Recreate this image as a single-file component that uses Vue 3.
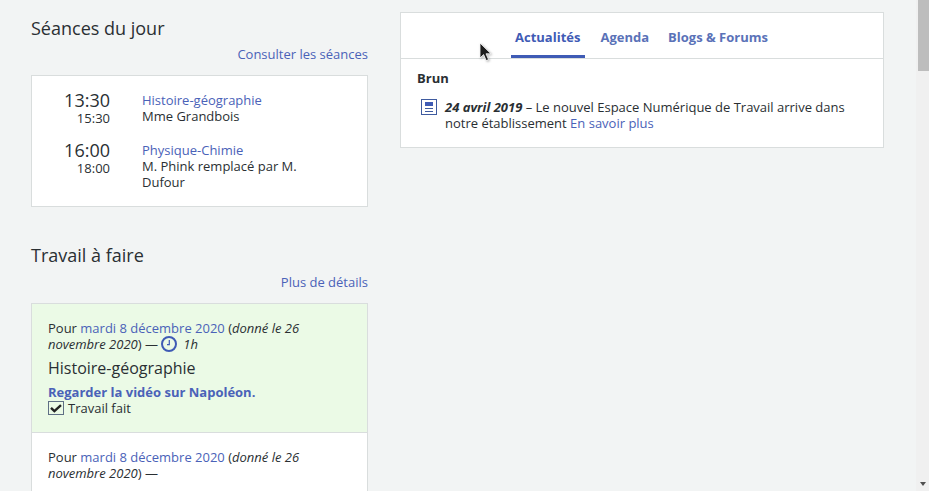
<script setup>
const sessions = [
  { start: '13:30', end: '15:30', subject: 'Histoire-géographie', teacher: 'Mme Grandbois' },
  { start: '16:00', end: '18:00', subject: 'Physique-Chimie', teacher: 'M. Phink remplacé par M. Dufour' },
]
const tabs = ['Actualités', 'Agenda', 'Blogs & Forums']
</script>

<template>
  <div class="page">
    <div class="content">
      <div class="left">
        <section class="seances">
          <h2>Séances du jour</h2>
          <div class="more"><a>Consulter les séances</a></div>
          <div class="box sessions">
            <div v-for="s in sessions" :key="s.start" class="session">
              <div class="times">
                <div class="start">{{ s.start }}</div>
                <div class="end">{{ s.end }}</div>
              </div>
              <div class="info">
                <a>{{ s.subject }}</a>
                <div>{{ s.teacher }}</div>
              </div>
            </div>
          </div>
        </section>
        <section class="travail">
          <h2>Travail à faire</h2>
          <div class="more"><a>Plus de détails</a></div>
          <div class="box work">
            <div class="hw done">
              <div class="when">
                Pour <a>mardi 8 décembre 2020</a> (<em>donné le 26 novembre 2020</em>) —
                <svg class="clock" width="16" height="16" viewBox="0 0 16 16">
                  <circle cx="8" cy="8" r="7" fill="none" stroke="#3f5bb5" stroke-width="2" />
                  <path d="M8.3 4v4.6H6" fill="none" stroke="#3f5bb5" stroke-width="1.2" />
                </svg>
                <em class="dur">1h</em>
              </div>
              <div class="subject">Histoire-géographie</div>
              <a class="task">Regarder la vidéo sur Napoléon.</a>
              <div class="check">
                <span class="checkbox">
                  <svg width="12" height="9" viewBox="0 0 12 9">
                    <path d="M1 3.8l3.4 3.3 6.6-6" fill="none" stroke="#222" stroke-width="2.4" />
                  </svg>
                </span>
                Travail fait
              </div>
            </div>
            <div class="hw">
              <div class="when">
                Pour <a>mardi 8 décembre 2020</a> (<em>donné le 26 novembre 2020</em>) —
              </div>
            </div>
          </div>
        </section>
      </div>
      <div class="right">
        <div class="box news">
          <div class="tabs">
            <div v-for="(t, i) in tabs" :key="t" class="tab" :class="{ active: i === 0 }">{{ t }}</div>
          </div>
          <div class="news-body">
            <div class="cat">Brun</div>
            <div class="item">
              <svg class="doc" width="16" height="16" viewBox="0 0 16 16">
                <rect x="0.5" y="0.5" width="15" height="15" fill="#fff" stroke="#3f5b9f" />
                <rect x="4" y="3" width="8" height="4" fill="#3f5bb5" />
                <rect x="4" y="9" width="8" height="1" fill="#3f5b9f" />
                <rect x="4" y="12" width="8" height="1" fill="#3f5b9f" />
              </svg>
              <p><strong><em>24 avril 2019</em></strong> – Le nouvel Espace Numérique de Travail arrive dans notre établissement <a>En savoir plus</a></p>
            </div>
          </div>
        </div>
      </div>
    </div>
    <div class="scrollbar">
      <div class="thumb"></div>
      <div class="arrow"></div>
    </div>
    <svg class="cursor" width="14" height="21" viewBox="0 0 14 21">
      <path d="M1 1v15l3.6-3.4 2.6 6 2.4-1-2.6-5.8H12z" fill="#1c1c1c" stroke="#fff" stroke-width="0.8" />
    </svg>
  </div>
</template>

<style>
html, body { margin: 0; background: #f2f4f4; }
</style>

<style scoped>
.page {
  position: relative;
  width: 929px;
  height: 491px;
  overflow: hidden;
  background: #f2f4f4;
  font-family: "Open Sans", sans-serif;
  font-size: 13px;
  line-height: 16px;
  color: #2a2f33;
}
.content {
  display: flex;
  align-items: flex-start;
  gap: 32px;
  padding: 12px 0 0 31px;
}
.left { width: 337px; flex: none; }
.right { width: 484px; flex: none; }
a { color: #4a62b8; }
h2 {
  margin: 0;
  font-size: 18px;
  font-weight: 400;
  line-height: 32px;
}
.more { text-align: right; margin-top: 2px; height: 16px; }
.box {
  background: #fff;
  border: 1px solid #d9dddd;
}
.seances .box { margin-top: 13px; }
.sessions { padding: 16px 16px 16px 0; height: 132px; box-sizing: border-box; }
.session { display: flex; margin-bottom: 17px; }
.times { width: 78px; text-align: right; flex: none; margin-top: -2px; }
.start { font-size: 18px; line-height: 20px; }
.end { line-height: 14px; margin-top: 1px; }
.info { margin-left: 32px; width: 170px; }
.info a { display: block; }
.travail { margin-top: 32px; }
.travail .more { margin-top: 3px; }
.travail .box { margin-top: 13px; }
.hw { padding: 16px; height: 96px; }
.hw.done { background: #ebfae6; border-bottom: 1px solid #d9dddd; }
.when { width: 290px; }
.clock { vertical-align: -3px; }
.dur { margin-left: 6px; }
.subject { font-size: 16px; line-height: 22px; margin-top: 5px; }
.task { display: block; font-weight: 700; margin-top: 5px; }
.check { display: flex; align-items: center; gap: 4px; }
.checkbox {
  display: flex;
  align-items: center;
  justify-content: center;
  width: 14px;
  height: 12px;
  border: 1px solid #5f6f85;
}
.tabs {
  display: flex;
  height: 45px;
  padding-left: 110px;
  gap: 11px;
  border-bottom: 1px solid #d9dddd;
}
.tab {
  padding: 0 4px;
  height: 45px;
  line-height: 48px;
  font-weight: 700;
  color: #5a72b8;
  box-sizing: border-box;
}
.tab.active { color: #3f5bb5; border-bottom: 3px solid #3f5bb5; padding-right: 5px; }
.news-body { padding: 11px 16px 16px; }
.cat { font-weight: 700; }
.item { display: flex; margin-top: 13px; padding-left: 4px; }
.doc { flex: none; }
.item p { margin: 0 0 0 8px; }
.scrollbar {
  position: absolute;
  top: 0;
  right: 0;
  bottom: 0;
  width: 13px;
  background: #f0f0f0;
}
.thumb {
  margin-left: 2px;
  height: 71px;
  background: #bdbdbd;
}
.arrow {
  position: absolute;
  left: 4px;
  bottom: 5px;
  width: 0;
  height: 0;
  border-left: 3.5px solid transparent;
  border-right: 3.5px solid transparent;
  border-top: 4px solid #505050;
}
.cursor {
  position: absolute;
  left: 479px;
  top: 42px;
  filter: drop-shadow(1px 1px 1px rgba(0, 0, 0, 0.3));
}
</style>
